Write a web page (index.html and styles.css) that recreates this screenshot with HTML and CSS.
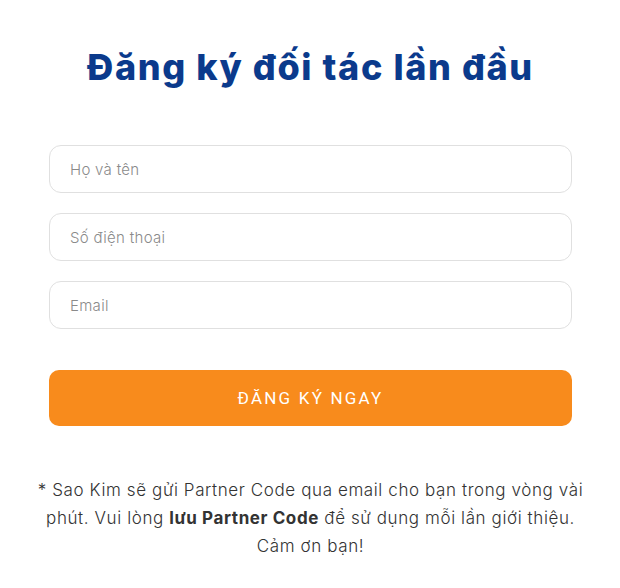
FILE: index.html
```html
<!DOCTYPE html>
<html lang="vi">
    <head>
        <meta charset="UTF-8" />
        <meta name="viewport" content="width=device-width, initial-scale=1.0" />
        <title>Đăng ký đối tác</title>
        <link rel="stylesheet" href="styles.css">
    </head>

    <body>
        <!-- Form đăng ký -->
        <div class="register">
            <h1 class="register-title">Đăng ký đối tác lần đầu</h1>
            <form class="register-form">
                <input class="field" type="text" placeholder="Họ và tên" />
                <input class="field" type="text" placeholder="Số điện thoại" />
                <input class="field" type="email" placeholder="Email" />
                <button class="btn-submit" type="button">ĐĂNG KÝ NGAY</button>
            </form>
            <p class="register-note">
                * Sao Kim sẽ gửi Partner Code qua email cho bạn trong vòng vài phút. Vui lòng
                <b>lưu Partner Code</b> để sử dụng mỗi lần giới thiệu. Cảm ơn bạn!
            </p>
        </div>
    </body>
</html>
```

FILE: styles.css
```css
* {
    margin: 0;
    padding: 0;
    box-sizing: border-box;
}
html,
body {
    background: #fff;
}
body {
    font-family: 'Inter', 'Noto Sans', sans-serif;
    color: #333;
}
.register {
    width: 620px;
    padding: 45px 48px 0 49px;
}
.register-title {
    font-size: 36px;
    line-height: 44px;
    font-weight: 800;
    color: #0b3a8c;
    text-align: center;
    letter-spacing: 1.6px;
}
.register-form {
    display: flex;
    flex-direction: column;
    gap: 20px;
    margin-top: 56px;
}
.field {
    height: 48px;
    border: 1px solid #e0e0e0;
    border-radius: 12px;
    padding: 0 20px;
    font-family: 'Inter', 'Noto Sans', sans-serif;
    font-size: 15px;
    letter-spacing: 0.3px;
    color: #333;
    outline: none;
}
.field::placeholder {
    color: #8a8a8a;
    font-weight: 300;
}
.btn-submit {
    height: 56px;
    margin-top: 21px;
    border: none;
    border-radius: 10px;
    background: #f88b1c;
    color: #fff;
    font-family: 'Roboto', sans-serif;
    font-size: 17px;
    font-weight: 400;
    letter-spacing: 2.2px;
    cursor: pointer;
}
.register-note {
    margin: 50px -16px 0;
    font-size: 17px;
    line-height: 28px;
    font-weight: 300;
    letter-spacing: 0.6px;
    text-align: center;
    color: #333;
}
.register-note b {
    font-weight: 700;
}
```
